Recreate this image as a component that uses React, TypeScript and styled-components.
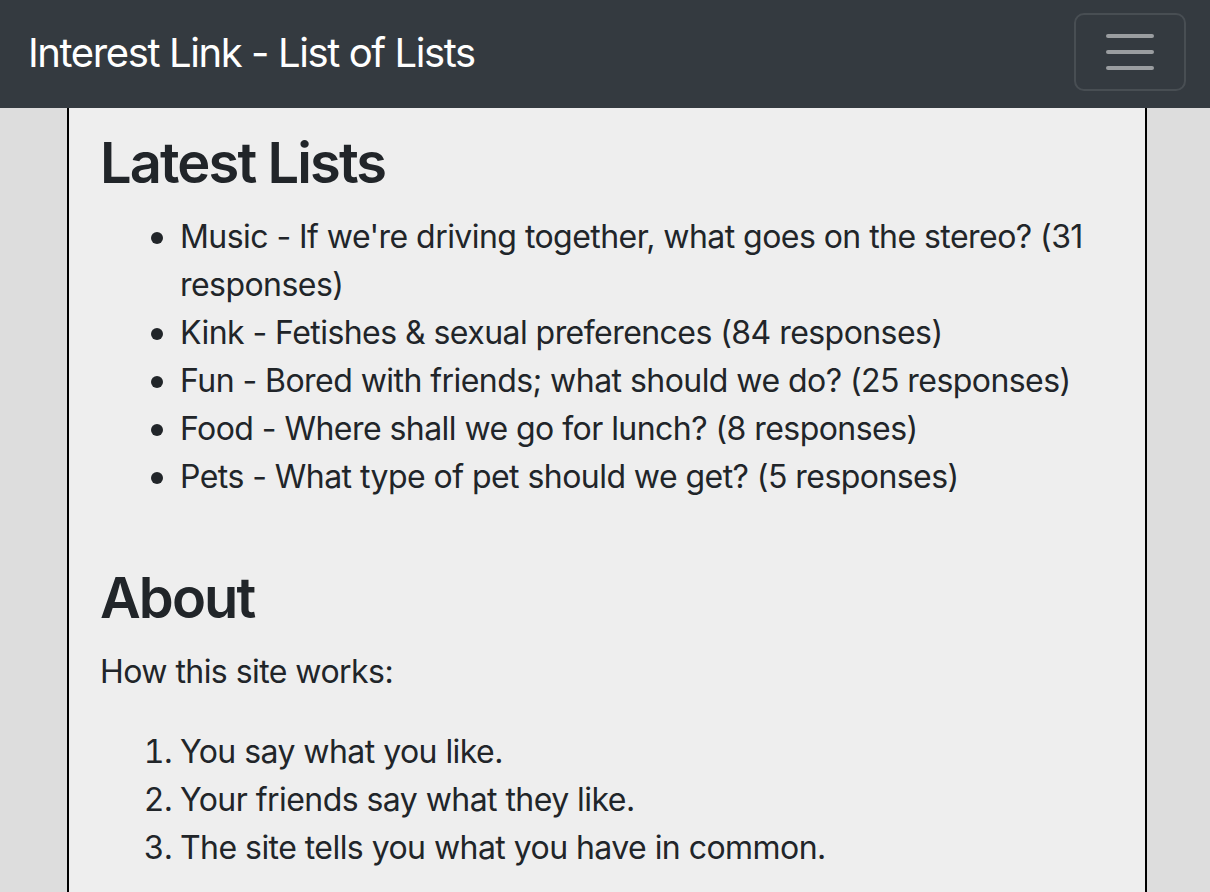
import React from "react";
import styled, { createGlobalStyle } from "styled-components";

const GlobalStyle = createGlobalStyle`
  html, body {
    margin: 0;
    padding: 0;
    background: #dddddd;
  }
  body {
    font-family: Inter, "Noto Sans", "Liberation Sans", sans-serif;
    font-size: 32px;
    line-height: 48px;
    color: #212529;
  }
  * { box-sizing: border-box; }
`;

const NavBar = styled.nav`
  height: 108px;
  background: #343a40;
  display: flex;
  align-items: center;
  justify-content: space-between;
  padding: 0 24px 0 28px;
`;

const Brand = styled.a`
  color: #ffffff;
  font-size: 40px;
  line-height: 60px;
  font-weight: 400;
  text-decoration: none;
  margin-top: -3px;
  letter-spacing: -1.4px;
`;

const Toggler = styled.button`
  width: 112px;
  height: 78px;
  border: 2px solid rgba(255, 255, 255, 0.1);
  border-radius: 10px;
  background: transparent;
  display: flex;
  flex-direction: column;
  align-items: center;
  justify-content: center;
  gap: 12px;
  padding: 0;
  margin-top: -4px;
`;

const TogglerBar = styled.span`
  display: block;
  width: 48px;
  height: 4px;
  border-radius: 2px;
  background: rgba(255, 255, 255, 0.5);
`;

const Main = styled.main`
  width: 1080px;
  margin-left: 67px;
  background: #eeeeee;
  border-left: 2px solid #000;
  border-right: 2px solid #000;
  padding: 22px 30px 0 31px;
  min-height: 784px;
`;

const Heading = styled.h3<{ $gap?: number }>`
  font-size: 56px;
  line-height: 67px;
  font-weight: 600;
  margin: ${(p) => p.$gap ?? 0}px 0 16px;
  letter-spacing: -1.9px;
`;

const List = styled.ul`
  margin: 0 0 32px;
  padding-left: 80px;
  list-style: none;
  letter-spacing: -0.55px;
`;

const Bullet = styled.li`
  position: relative;

  &::before {
    content: "";
    position: absolute;
    left: -29px;
    top: 19px;
    width: 12px;
    height: 12px;
    border-radius: 50%;
    background: #212529;
  }
`;

const OrderedList = styled.ol`
  margin: 0;
  padding-left: 80px;
  letter-spacing: -0.55px;
`;

const Para = styled.p`
  margin: 0 0 32px;
  letter-spacing: -0.55px;
`;

const lists = [
  "Music - If we're driving together, what goes on the stereo? (31 responses)",
  "Kink - Fetishes & sexual preferences (84 responses)",
  "Fun - Bored with friends; what should we do? (25 responses)",
  "Food - Where shall we go for lunch? (8 responses)",
  "Pets - What type of pet should we get? (5 responses)",
];

const steps = [
  "You say what you like.",
  "Your friends say what they like.",
  "The site tells you what you have in common.",
];

export default function App() {
  return (
    <>
      <GlobalStyle />
      <NavBar>
        <Brand href="#">Interest Link - List of Lists</Brand>
        <Toggler aria-label="Toggle navigation">
          <TogglerBar />
          <TogglerBar />
          <TogglerBar />
        </Toggler>
      </NavBar>
      <Main>
        <Heading>Latest Lists</Heading>
        <List>
          {lists.map((l) => (
            <Bullet key={l}>{l}</Bullet>
          ))}
        </List>
        <Heading $gap={64}>About</Heading>
        <Para>How this site works:</Para>
        <OrderedList>
          {steps.map((s) => (
            <li key={s}>{s}</li>
          ))}
        </OrderedList>
      </Main>
    </>
  );
}
